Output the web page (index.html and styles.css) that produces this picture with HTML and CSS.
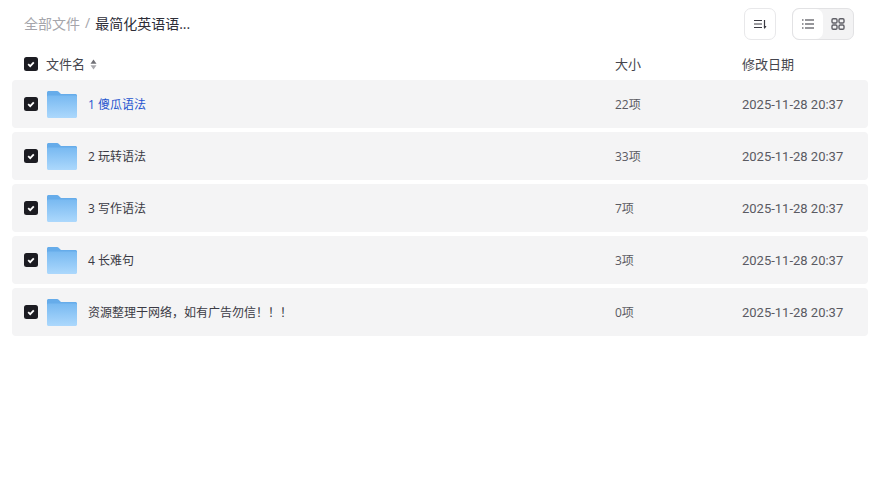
FILE: index.html
```html
<!DOCTYPE html>
<html lang="zh-CN">
<head>
  <meta charset="UTF-8" />
  <meta name="viewport" content="width=device-width, initial-scale=1.0"/>
  <title>全部文件</title>
  <link rel="stylesheet" href="styles.css">
</head>
<body>
  <svg class="defs" width="0" height="0" aria-hidden="true">
    <defs>
      <linearGradient id="folder-front" x1="0" y1="0" x2="0" y2="1">
        <stop offset="0" stop-color="#78b9f1"/>
        <stop offset="1" stop-color="#acd8fc"/>
      </linearGradient>
      <symbol id="folder" viewBox="0 0 30 27">
        <path d="M0 1.500C0 .7.7 0 1.500 0h8.700c.5 0 .9.2 1.200.5L14 3h14.500c.8 0 1.500.7 1.500 1.500V10H0z" fill="#66acea"/>
        <path d="M0 6C0 5.200.7 4.500 1.500 4.500h27c.8 0 1.500.7 1.500 1.500v19.500c0 .8-.7 1.500-1.500 1.500h-27C.7 27 0 26.300 0 25.500z" fill="url(#folder-front)"/>
      </symbol>
      <symbol id="check" viewBox="0 0 14 14">
        <rect width="14" height="14" rx="2.500" fill="#1c1c22"/>
        <path d="M4.200 7.200l2 2L9.800 5.400" fill="none" stroke="#fff" stroke-width="1.800"/>
      </symbol>
    </defs>
  </svg>

  <div class="toolbar">
    <div class="crumbs">
      <span class="crumb-root">全部文件</span>
      <span class="crumb-sep">/</span>
      <span class="crumb-current">最简化英语语...</span>
    </div>
    <div class="tools">
      <button class="tool-btn">
        <svg width="16" height="16" viewBox="0 0 16 16" fill="none" stroke="#3a3a42" stroke-width="1.200">
          <path d="M2 4.500h8M2 8h8M2 11.500h8"/>
          <path d="M12.500 4v8"/>
          <path d="M11.800 10L12.500 13.200l2-3.200z" fill="#3a3a42" stroke="none"/>
        </svg>
      </button>
      <div class="view-switch">
        <button class="view-btn active">
          <svg width="16" height="16" viewBox="0 0 16 16" fill="none" stroke="#2e2e36" stroke-width="1.200">
            <path d="M2 4h1.500M2 8h1.500M2 12h1.500M5 4h9M5 8h9M5 12h9"/>
          </svg>
        </button>
        <button class="view-btn">
          <svg width="16" height="16" viewBox="0 0 16 16" fill="none" stroke="#606067" stroke-width="1.400">
            <rect x="2" y="2.700" width="5" height="4.300" rx="1.200"/>
            <rect x="9" y="2.700" width="5" height="4.300" rx="1.200"/>
            <rect x="2" y="9" width="5" height="4.300" rx="1.200"/>
            <rect x="9" y="9" width="5" height="4.300" rx="1.200"/>
          </svg>
        </button>
      </div>
    </div>
  </div>

  <div class="list-head">
    <svg class="checkbox"><use href="#check"/></svg>
    <div class="head-name">
      文件名
      <svg class="sort-icon" width="7" height="11" viewBox="0 0 7 11">
        <path d="M3.500 .5L6.500 4.700H.5z" fill="#6f6f75"/>
        <path d="M3.500 10.500L.5 6.300h6z" fill="#a8a8ad"/>
      </svg>
    </div>
    <div class="head-label">大小</div>
    <div class="head-label">修改日期</div>
  </div>

  <div class="file-list">
    <div class="file-row">
      <svg class="checkbox"><use href="#check"/></svg>
      <div class="file-name hovered"><svg class="folder"><use href="#folder"/></svg>1 傻瓜语法</div>
      <div>22项</div>
      <div class="file-date">2025-11-28 20:37</div>
    </div>
    <div class="file-row">
      <svg class="checkbox"><use href="#check"/></svg>
      <div class="file-name"><svg class="folder"><use href="#folder"/></svg>2 玩转语法</div>
      <div>33项</div>
      <div class="file-date">2025-11-28 20:37</div>
    </div>
    <div class="file-row">
      <svg class="checkbox"><use href="#check"/></svg>
      <div class="file-name"><svg class="folder"><use href="#folder"/></svg>3 写作语法</div>
      <div>7项</div>
      <div class="file-date">2025-11-28 20:37</div>
    </div>
    <div class="file-row">
      <svg class="checkbox"><use href="#check"/></svg>
      <div class="file-name"><svg class="folder"><use href="#folder"/></svg>4 长难句</div>
      <div>3项</div>
      <div class="file-date">2025-11-28 20:37</div>
    </div>
    <div class="file-row">
      <svg class="checkbox"><use href="#check"/></svg>
      <div class="file-name"><svg class="folder"><use href="#folder"/></svg>资源整理于网络，如有广告勿信！！！</div>
      <div>0项</div>
      <div class="file-date">2025-11-28 20:37</div>
    </div>
  </div>
</body>
</html>
```

FILE: styles.css
```css
body {
  margin: 0;
  padding: 8px 10px 0 12px;
  background: #fff;
  font-family: "Open Sans", "Noto Sans CJK SC", sans-serif;
  font-size: 12px;
  color: #5a5a62;
}

.defs {
  position: absolute;
}

.toolbar {
  display: flex;
  justify-content: space-between;
  align-items: center;
  height: 32px;
  padding: 0 14px 0 12px;
}

.crumbs {
  display: flex;
  align-items: center;
  gap: 5px;
  font-size: 14px;
  margin-top: -3px;
}

.crumb-root {
  color: #a5a5ab;
}

.crumb-sep {
  color: #a5a5ab;
}

.crumb-current {
  color: #2e2e38;
}

.tools {
  display: flex;
  gap: 16px;
}

button {
  display: flex;
  align-items: center;
  justify-content: center;
  padding: 0;
  background: #fff;
  border: none;
}

.tool-btn {
  width: 32px;
  height: 32px;
  border: 1px solid #e8e8ea;
  border-radius: 7px;
}

.view-switch {
  display: flex;
  width: 62px;
  height: 32px;
  box-sizing: border-box;
  border: 1px solid #e2e2e4;
  border-radius: 7px;
  background: #f3f3f4;
  overflow: hidden;
}

.view-btn {
  flex: 1;
  background: transparent;
}

.view-btn.active {
  background: #fff;
  border-radius: 7px;
}

.list-head,
.file-row {
  display: grid;
  grid-template-columns: 14px 577px 127px 1fr;
  align-items: center;
  padding-left: 12px;
}

.list-head {
  height: 40px;
  box-sizing: border-box;
  padding-top: 8px;
  font-size: 13px;
  color: #45454d;
}

.head-name {
  display: flex;
  align-items: center;
  gap: 5px;
  padding-left: 8px;
  margin-top: -2px;
}

.head-label {
  margin-top: -2px;
}

.sort-icon {
  margin-top: 2px;
}

.checkbox {
  width: 14px;
  height: 14px;
}

.file-list {
  display: flex;
  flex-direction: column;
  gap: 4px;
}

.file-row {
  height: 48px;
  background: #f4f4f5;
  border-radius: 4px;
}

.file-name {
  display: flex;
  align-items: center;
  gap: 11px;
  padding-left: 9px;
  color: #3a3a44;
}

.file-name.hovered {
  color: #1f55cf;
}

.file-date {
  font-family: Roboto, "Noto Sans CJK SC", sans-serif;
  font-size: 13px;
}

.folder {
  width: 30px;
  height: 27px;
  flex: none;
  margin-top: 1px;
}
```
